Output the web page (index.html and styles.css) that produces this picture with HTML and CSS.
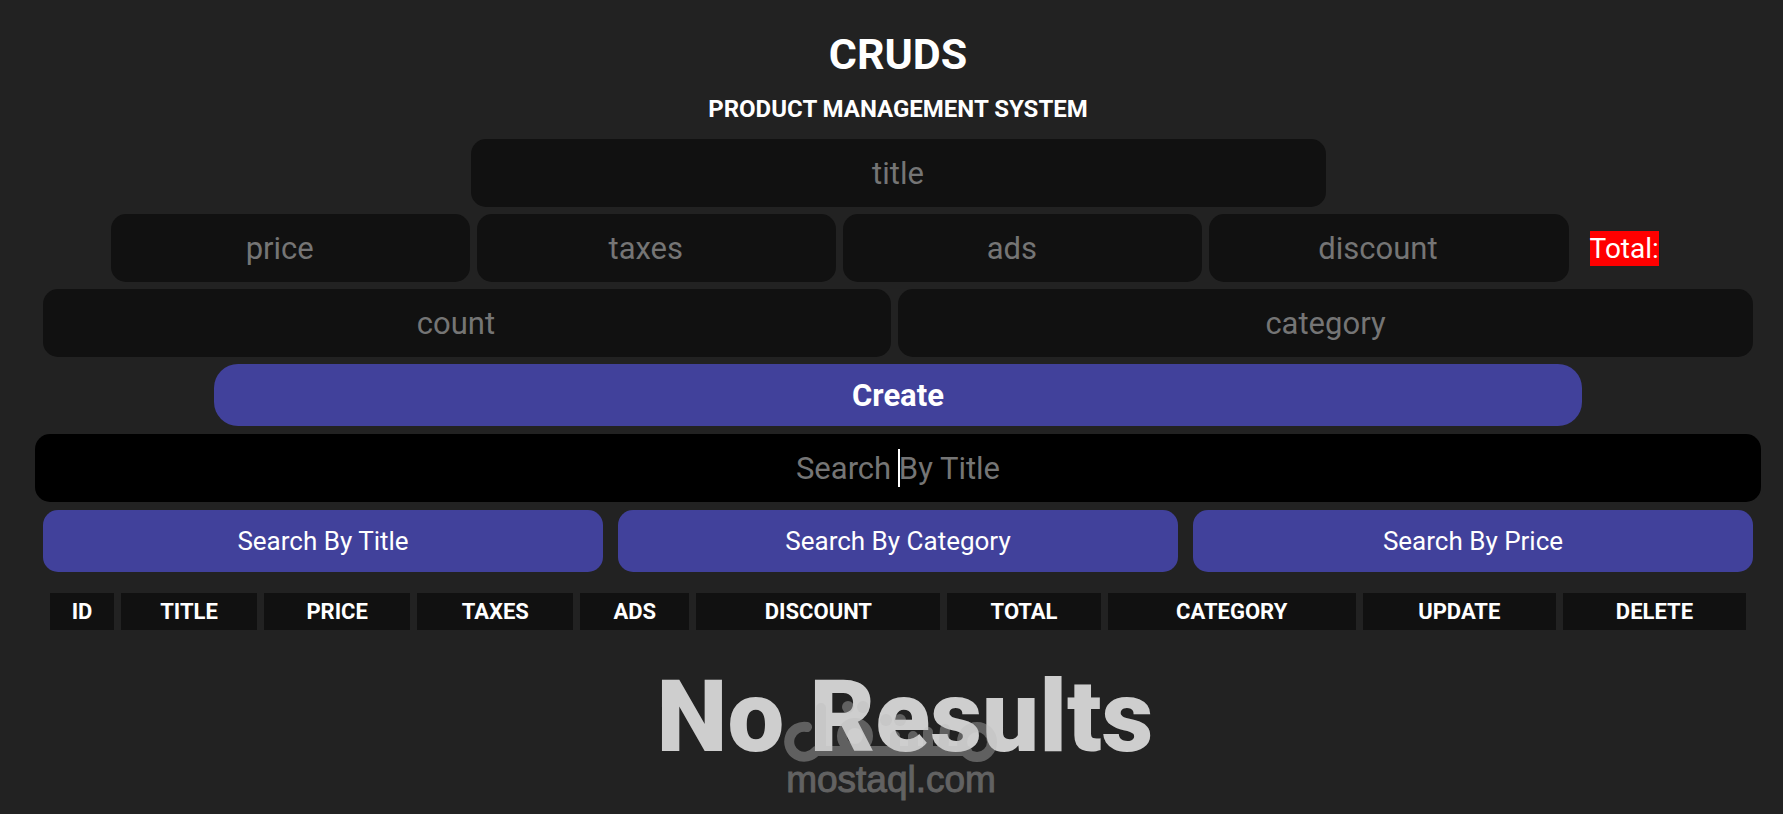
FILE: index.html
```
<!DOCTYPE html>
<html lang="en">
<head>
    <meta charset="UTF-8">
    <meta name="viewport" content="width=device-width, initial-scale=1.0">
    <title>CRUDS</title>
    <link rel="stylesheet" href="styles.css">
</head>
<body>
    <div class="cruds">
        <div class="head">
            <h1>CRUDS</h1>
            <h2>PRODUCT MANAGEMENT SYSTEM</h2>
        </div>

        <form class="inputs">
            <input class="title" type="text" id="title" placeholder="title" aria-label="title">
            <div class="price">
                <input type="number" id="price" placeholder="price" aria-label="price">
                <input type="number" id="taxes" placeholder="taxes" aria-label="taxes">
                <input type="number" id="ads" placeholder="ads" aria-label="ads">
                <input type="number" id="discount" placeholder="discount" aria-label="discount">
                <span class="total" id="total">Total:</span>
            </div>
            <div class="stock">
                <input class="count" type="number" id="count" placeholder="count" aria-label="count">
                <input class="category" type="text" id="category" placeholder="category" aria-label="category">
            </div>
            <button class="create" type="button" id="submit">Create</button>
        </form>

        <div class="search">
            <input type="text" id="search" placeholder="Search By Title" aria-label="Search">
            <span class="caret"></span>
        </div>
        <div class="searchBtns">
            <button type="button" id="searchTitle">Search By Title</button>
            <button type="button" id="searchCategory">Search By Category</button>
            <button type="button" id="searchPrice">Search By Price</button>
        </div>

        <table>
            <colgroup>
                <col class="c-id"><col class="c-title"><col class="c-price"><col class="c-taxes"><col class="c-ads">
                <col class="c-discount"><col class="c-total"><col class="c-category"><col class="c-update"><col class="c-delete">
            </colgroup>
            <thead>
                <tr>
                    <th>ID</th>
                    <th>TITLE</th>
                    <th>PRICE</th>
                    <th>TAXES</th>
                    <th>ADS</th>
                    <th>DISCOUNT</th>
                    <th>TOTAL</th>
                    <th>CATEGORY</th>
                    <th>UPDATE</th>
                    <th>DELETE</th>
                </tr>
            </thead>
            <tbody id="tbody"></tbody>
        </table>

        <div class="empty">
            <p class="noResults">No Results</p>
            <div class="watermark">
                <svg width="212" height="60" viewBox="0 0 212 60" fill="none" stroke="currentColor" stroke-width="10" stroke-linecap="round" stroke-linejoin="round">
                    <g opacity="0.4">
                        <path d="M22 27a15 15 0 1 0 9 24H182"/>
                        <circle cx="192" cy="42" r="15"/>
                        <circle cx="70" cy="36" r="13"/>
                        <path d="M36 8v43M110 36v15M128 36v15M143 32v19M160 29l-2 22"/>
                        <g fill="currentColor" stroke="none">
                            <circle cx="63" cy="7" r="6"/>
                            <circle cx="78" cy="7" r="6"/>
                            <circle cx="101" cy="20" r="6"/>
                            <circle cx="115" cy="20" r="6"/>
                        </g>
                    </g>
                </svg>
                <p class="site">mostaql.com</p>
            </div>
        </div>
    </div>
</body>
</html>
```

FILE: styles.css
```
* {
    box-sizing: border-box;
}
body {
    margin: 0;
    min-height: 100vh;
    background: #222;
    color: #fff;
    font-family: Roboto, sans-serif;
}
.cruds {
    padding: 28px 30px 0 43px;
}
.head {
    text-align: center;
}
h1 {
    margin: 0;
    font-size: 43px;
    line-height: 52px;
}
h2 {
    margin: 13px 0 14px;
    font-size: 24px;
    line-height: 32px;
}
.inputs {
    display: flex;
    flex-direction: column;
    align-items: center;
    gap: 7px;
}
input {
    height: 68px;
    min-width: 0;
    padding: 0 8px;
    border: none;
    outline: none;
    border-radius: 15px;
    background: #111;
    color: #fff;
    font-family: inherit;
    font-size: 31px;
    text-align: center;
}
input[type="number"] {
    padding-right: 15px;
}
input::placeholder {
    color: #757575;
}
.title {
    width: 50%;
}
.price {
    width: 100%;
    display: flex;
    align-items: center;
    justify-content: center;
    gap: 7px;
}
.price input {
    width: 21%;
}
.total {
    margin: 0 26px 0 14px;
    background: red;
    font-size: 28px;
    line-height: 35px;
}
.stock {
    width: 100%;
    display: flex;
    gap: 7px;
}
.count {
    flex: 1;
}
.category {
    width: 50%;
}
button {
    height: 62px;
    border: none;
    border-radius: 15px;
    background: #41419b;
    color: #fff;
    font-family: inherit;
    font-size: 26px;
    cursor: pointer;
}
.create {
    width: 80%;
    border-radius: 24px;
    font-size: 31px;
    font-weight: bold;
}
.search {
    position: relative;
    margin: 8px -8px;
}
.search input {
    display: block;
    width: 100%;
    background: #000;
}
.caret {
    position: absolute;
    top: 15px;
    left: 50%;
    width: 2px;
    height: 38px;
    background: #fff;
}
.searchBtns {
    display: flex;
    gap: 15px;
}
.searchBtns button {
    flex: 1;
}
table {
    width: 100%;
    margin-top: 14px;
    border-spacing: 7px;
    table-layout: fixed;
}
th {
    padding: 0;
    background: #111;
    font-size: 22px;
    line-height: 37px;
}
.c-id { width: 64px; }
.c-title { width: 136px; }
.c-price { width: 146px; }
.c-taxes { width: 156px; }
.c-ads { width: 109px; }
.c-discount { width: 244px; }
.c-total { width: 153px; }
.c-category { width: 248px; }
.c-update { width: 193px; }
.c-delete { width: 183px; }
.empty {
    position: relative;
    padding-top: 30px;
    text-align: center;
}
.noResults {
    margin: 0;
    padding-left: 14px;
    color: #cecece;
    font-size: 101px;
    font-weight: 900;
    line-height: 100px;
}
.watermark {
    position: absolute;
    top: 63px;
    left: 50%;
    width: 212px;
    margin-left: -113px;
    color: #bebebe;
}
.watermark svg {
    display: block;
    overflow: visible;
}
.site {
    margin: 0;
    color: #626262;
    font-family: "Liberation Sans", sans-serif;
    font-size: 37px;
    line-height: 40px;
    -webkit-text-stroke: 1px #626262;
}
```
